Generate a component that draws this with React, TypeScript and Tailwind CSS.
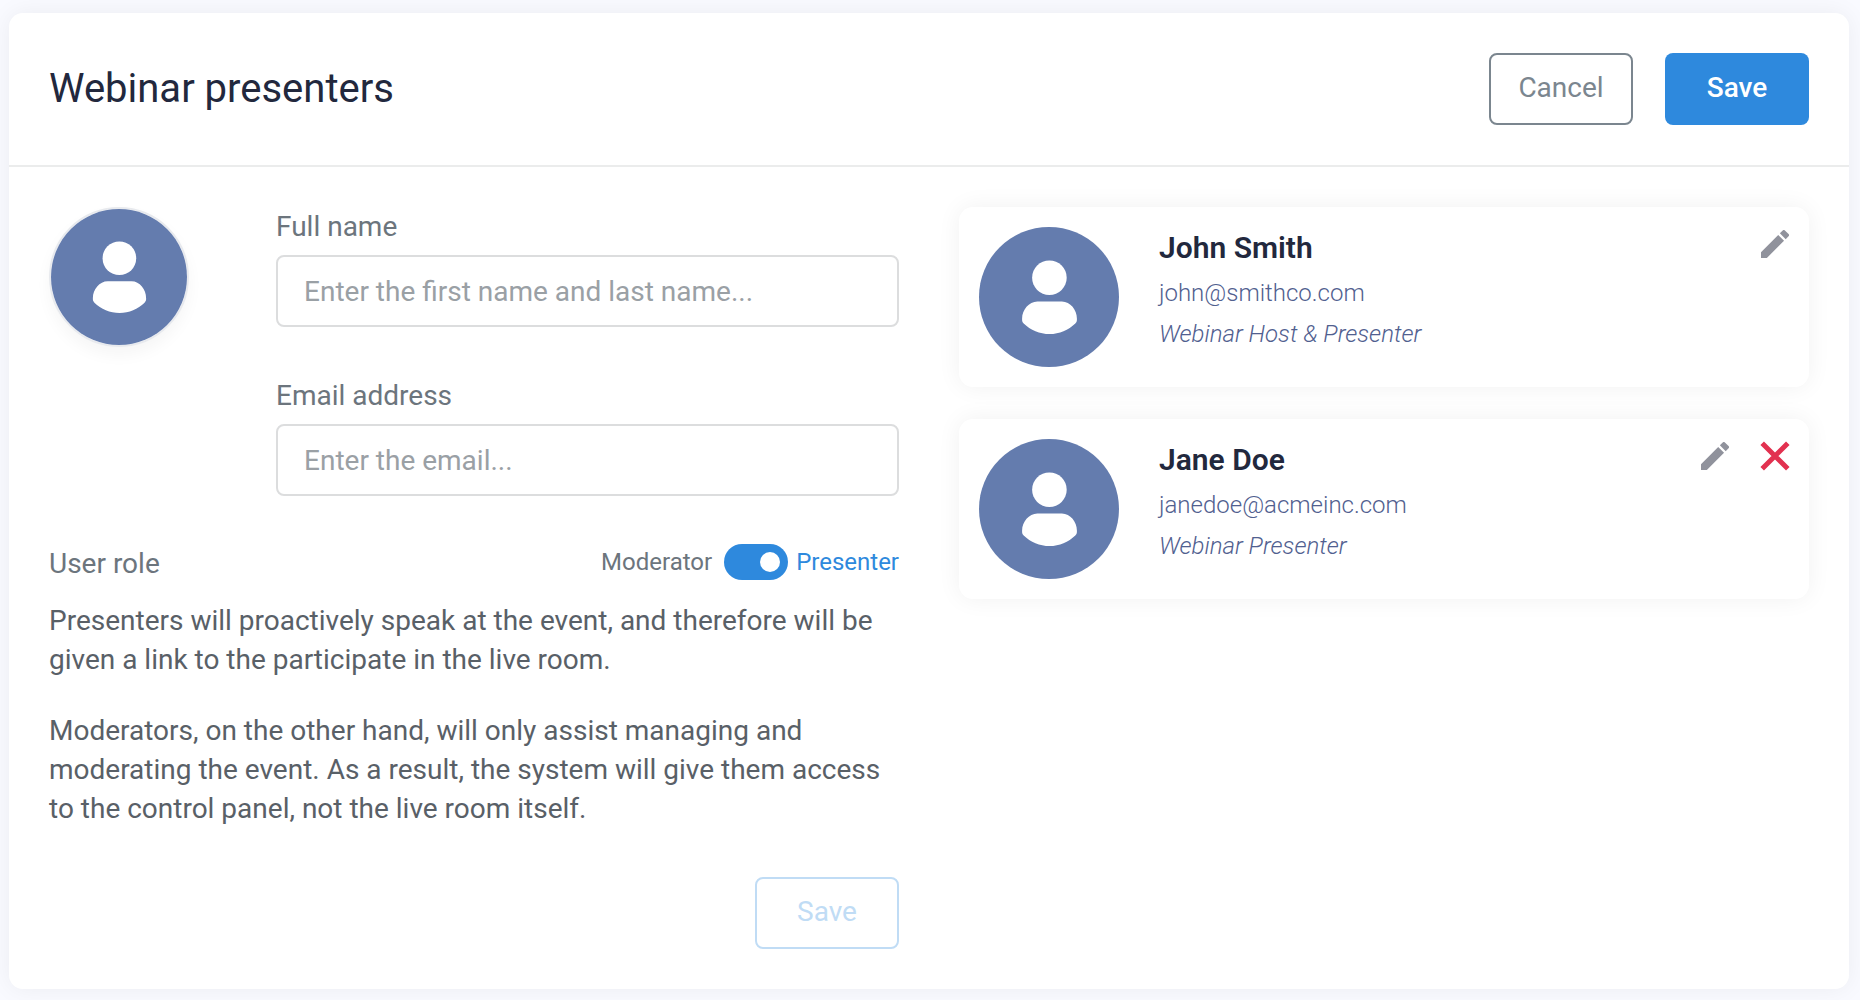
import { useState } from "react";

type Presenter = {
  name: string;
  email: string;
  role: string;
  removable: boolean;
};

const presenters: Presenter[] = [
  { name: "John Smith", email: "john@smithco.com", role: "Webinar Host & Presenter", removable: false },
  { name: "Jane Doe", email: "janedoe@acmeinc.com", role: "Webinar Presenter", removable: true },
];

function Avatar() {
  return (
    <svg viewBox="0 0 140 140" className="size-full rounded-full bg-[#647cae]" aria-hidden="true">
      <circle cx="70.4" cy="50.7" r="17.3" fill="#fff" />
      <path
        d="M58.400 74.500h24.500c8.500 0 15 8.500 15 17v1.500c0 1.500-.6 2.500-1.600 3.400C89.400 103 80.400 107 70.600 107S51.400 103 44.700 96.400c-1-.9-1.600-1.900-1.600-3.400v-1.500c0-8.500 6.800-17 15.300-17z"
        fill="#fff"
      />
    </svg>
  );
}

function PencilIcon() {
  return (
    <svg viewBox="3 3 18 18" className="size-7" fill="currentColor" aria-hidden="true">
      <path d="M3 17.250V21h3.750L17.810 9.940l-3.750-3.750L3 17.250zM20.710 7.040a.996.996 0 0 0 0-1.410l-2.340-2.340a.996.996 0 0 0-1.410 0l-1.830 1.830 3.750 3.750 1.830-1.830z" />
    </svg>
  );
}

function CloseIcon() {
  return (
    <svg viewBox="0 0 28 28" className="size-7 overflow-visible" fill="none" stroke="currentColor" strokeWidth="5" aria-hidden="true">
      <path d="M1.200 1.200l25.600 25.600M26.800 1.200L1.200 26.800" />
    </svg>
  );
}

function PresenterCard({ presenter }: { presenter: Presenter }) {
  return (
    <li className="flex gap-10 rounded-[14px] bg-white p-5 shadow-[0_0_24px_rgba(0,0,0,0.06)]">
      <div className="size-35 shrink-0">
        <Avatar />
      </div>
      <div className="min-w-0 flex-1">
        <h2 className="text-[30px] leading-[42px] font-semibold text-[#22283d]">{presenter.name}</h2>
        <p className="mt-1 text-2xl leading-[41px] font-light text-[#51608f]">{presenter.email}</p>
        <p className="text-2xl leading-[41px] font-light text-[#51608f] italic">{presenter.role}</p>
      </div>
      <div className="flex items-start gap-8 pt-[3px]">
        <button type="button" aria-label={`Edit ${presenter.name}`} className="text-[#90929c]">
          <PencilIcon />
        </button>
        {presenter.removable && (
          <button type="button" aria-label={`Remove ${presenter.name}`} className="text-[#e23150]">
            <CloseIcon />
          </button>
        )}
      </div>
    </li>
  );
}

export default function App() {
  const [isPresenter, setIsPresenter] = useState(true);

  return (
    <div className="min-h-screen bg-[#f9faff] pt-[13px] pr-[11px] pb-[11px] pl-[9px] font-[Roboto,sans-serif]">
      <main className="rounded-[14px] bg-white shadow-[0_0_24px_rgba(0,0,0,0.06)]">
        <header className="flex items-center justify-between border-b-2 border-[#ebecec] p-10">
          <h1 className="text-[40px] leading-[48px] text-[#22283d]">Webinar presenters</h1>
          <div className="flex gap-8">
            <button type="button" className="h-18 w-36 rounded-lg border-2 border-[#7b868f] pb-0.5 text-[28px] text-[#7b868f]">
              Cancel
            </button>
            <button type="button" className="h-18 w-36 rounded-lg bg-[#2e89dd] pb-0.5 text-[28px] font-medium text-white">
              Save
            </button>
          </div>
        </header>

        <div className="grid grid-cols-2 gap-15 p-10">
          <form className="flex flex-col" onSubmit={(e) => e.preventDefault()}>
            <div className="flex gap-[87px]">
              <div className="size-35 shrink-0 rounded-full border-2 border-[#e8eaee] shadow-[0_8px_16px_rgba(0,0,0,0.04)]">
                <Avatar />
              </div>
              <div className="flex flex-1 flex-col gap-[49px]">
                <div className="flex flex-col gap-2">
                  <label htmlFor="name" className="text-[28px] leading-10 text-[#6c757d]">Full name</label>
                  <input
                    id="name"
                    type="text"
                    placeholder="Enter the first name and last name..."
                    className="h-18 w-full rounded-lg border-2 border-[#dcddde] px-[26px] text-[28px] placeholder:text-[#9aa0a5]"
                  />
                </div>
                <div className="flex flex-col gap-2">
                  <label htmlFor="email" className="text-[28px] leading-10 text-[#6c757d]">Email address</label>
                  <input
                    id="email"
                    type="email"
                    placeholder="Enter the email..."
                    className="h-18 w-full rounded-lg border-2 border-[#dcddde] px-[26px] text-[28px] placeholder:text-[#9aa0a5]"
                  />
                </div>
              </div>
            </div>

            <div className="mt-12 flex items-start justify-between">
              <span className="text-[28px] leading-10 text-[#6c757d]">User role</span>
              <label className="flex items-center text-2xl leading-9 text-[#6c757d]">
                Moderator
                <input
                  type="checkbox"
                  role="switch"
                  checked={isPresenter}
                  onChange={(e) => setIsPresenter(e.target.checked)}
                  className="mr-2 ml-3 h-9 w-16 appearance-none rounded-full bg-[#adb5bd] p-2 before:block before:size-5 before:rounded-full before:bg-white checked:bg-[#2e89dd] checked:before:ml-auto"
                />
                <span className="text-[#2e89dd]">Presenter</span>
              </label>
            </div>

            <div className="mt-[17px] space-y-8 text-[28px] leading-[39px] text-[#596067]">
              <p>Presenters will proactively speak at the event, and therefore will be given a link to the participate in the live room.</p>
              <p>Moderators, on the other hand, will only assist managing and moderating the event. As a result, the system will give them access to the control panel, not the live room itself.</p>
            </div>

            <button
              type="submit"
              disabled
              className="mt-[49px] h-18 w-36 self-end rounded-lg border-2 border-[#c0dcf5] pb-0.5 text-[28px] text-[#c0dcf5]"
            >
              Save
            </button>
          </form>

          <ul className="flex flex-col gap-8">
            {presenters.map((presenter) => (
              <PresenterCard key={presenter.email} presenter={presenter} />
            ))}
          </ul>
        </div>
      </main>
    </div>
  );
}
